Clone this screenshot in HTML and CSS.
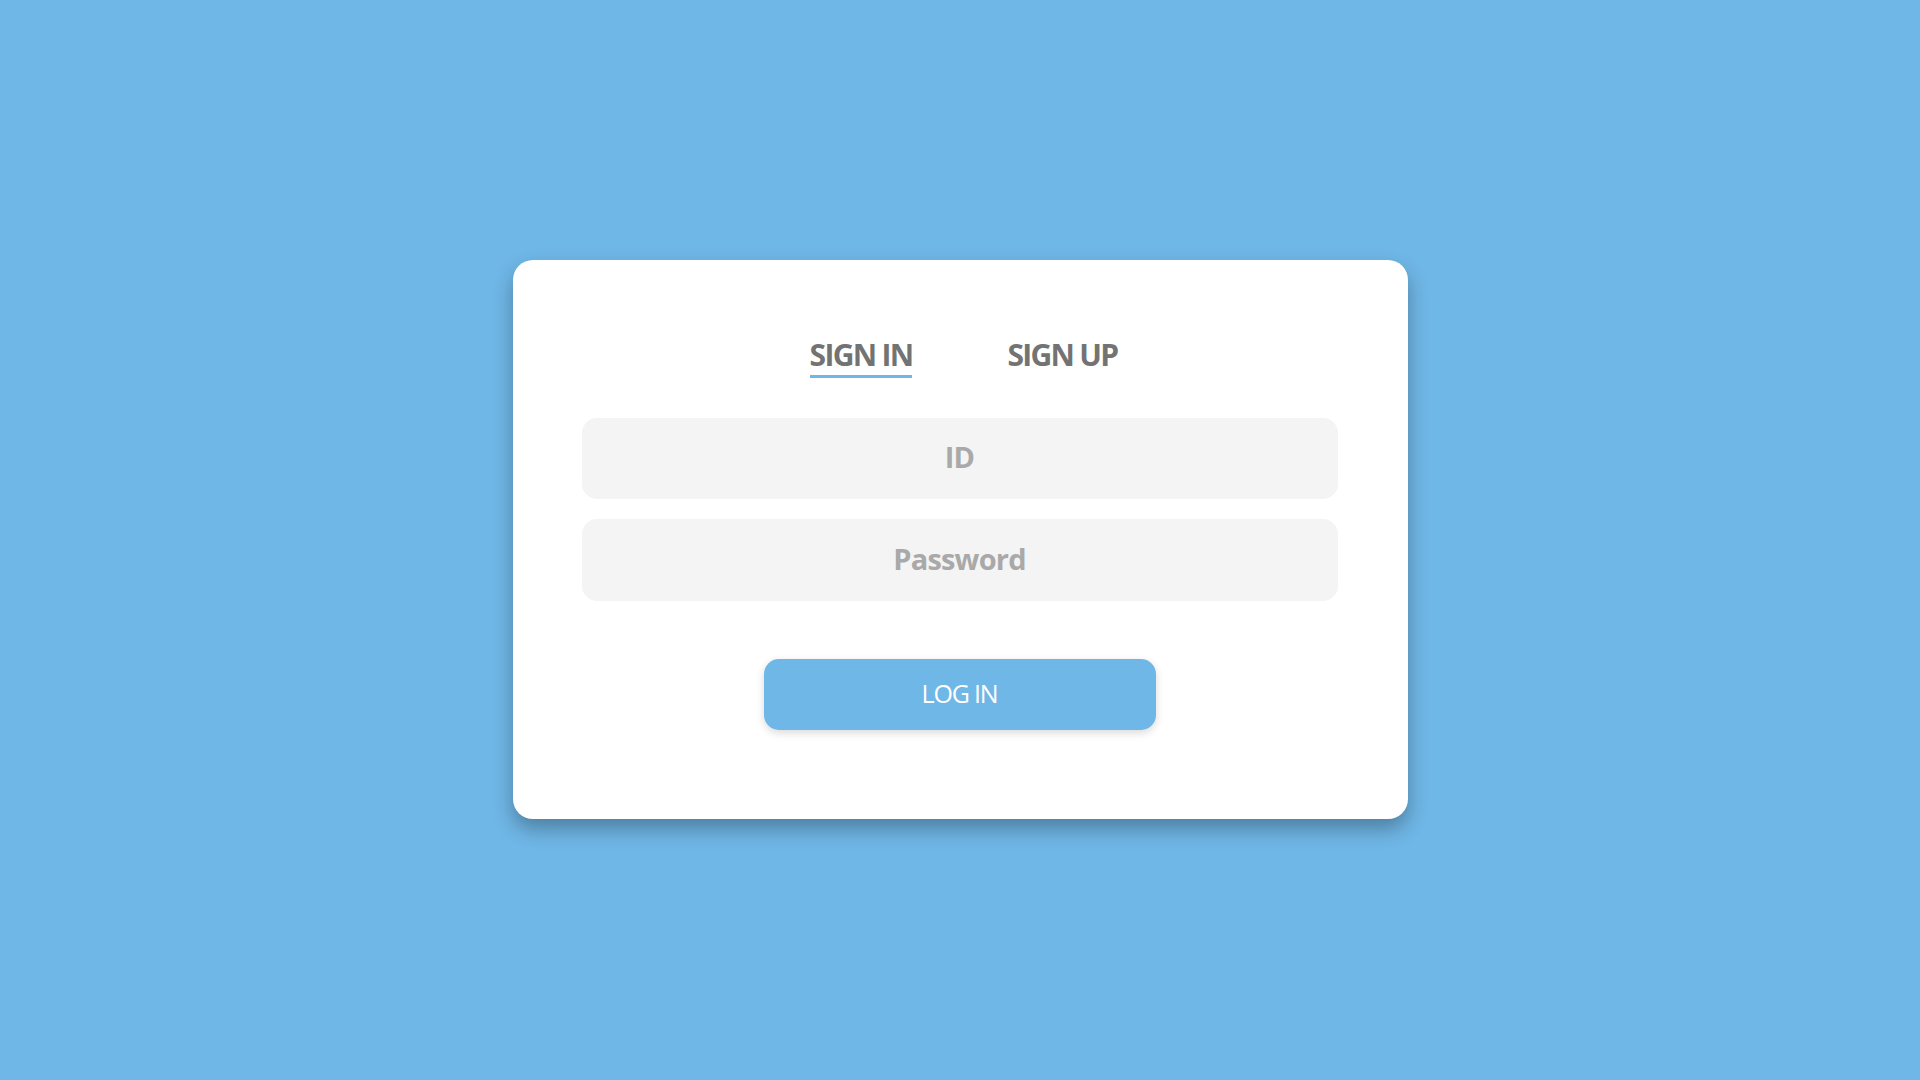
FILE: index.html
```html
<!DOCTYPE html>
<html lang="en">
<head>
<meta charset="utf-8">
<title>Sign in</title>
<link rel="stylesheet" href="styles.css">
</head>
<body>
<main class="card">
  <nav class="tabs">
    <a class="tab active" href="#">SIGN IN</a>
    <a class="tab" href="#">SIGN UP</a>
  </nav>
  <form class="form">
    <input class="field" type="text" placeholder="ID">
    <input class="field" type="password" placeholder="Password">
    <button class="btn" type="button">LOG IN</button>
  </form>
</main>
</body>
</html>
```
FILE: styles.css
```css
html, body {
  margin: 0;
  height: 100%;
}
body {
  background: #6fb7e7;
  display: flex;
  align-items: center;
  justify-content: center;
  font-family: "Open Sans", "Noto Sans", sans-serif;
}
.card {
  box-sizing: border-box;
  width: 895px;
  height: 559px;
  margin-top: -1px;
  background: #ffffff;
  border-radius: 20px;
  box-shadow: 0 10px 20px rgba(0, 0, 0, 0.3);
  padding: 75px 70px 0 69px;
  display: flex;
  flex-direction: column;
  align-items: center;
}
.tabs {
  display: flex;
  gap: 95px;
  margin-left: 8px;
}
.tab {
  font-size: 30px;
  font-weight: 700;
  line-height: 40px;
  letter-spacing: -1.7px;
  color: #737373;
  text-decoration: none;
  border-bottom: 3px solid transparent;
}
.tab.active {
  border-bottom-color: #6fb7e7;
}
.form {
  display: flex;
  flex-direction: column;
  align-items: center;
  margin-top: 40px;
}
.field {
  box-sizing: border-box;
  width: 756px;
  height: 81px;
  margin: 0 0 20px;
  padding: 0 0 4px;
  border: none;
  outline: none;
  border-radius: 15px;
  background: #f4f4f4;
  font-family: inherit;
  font-size: 29px;
  font-weight: 700;
  letter-spacing: -0.8px;
  text-align: center;
  color: #555;
}
.field::placeholder {
  color: #a9a9a9;
}
.field + .field {
  height: 82px;
  margin-bottom: 58px;
}
.btn {
  width: 392px;
  height: 71px;
  padding: 0 0 3px;
  border: none;
  border-radius: 15px;
  background: #6fb7e7;
  color: #ffffff;
  font-family: inherit;
  font-size: 25px;
  font-weight: 400;
  letter-spacing: -1.2px;
  box-shadow: 0 3px 8px rgba(0, 0, 0, 0.15);
  cursor: pointer;
}
```
